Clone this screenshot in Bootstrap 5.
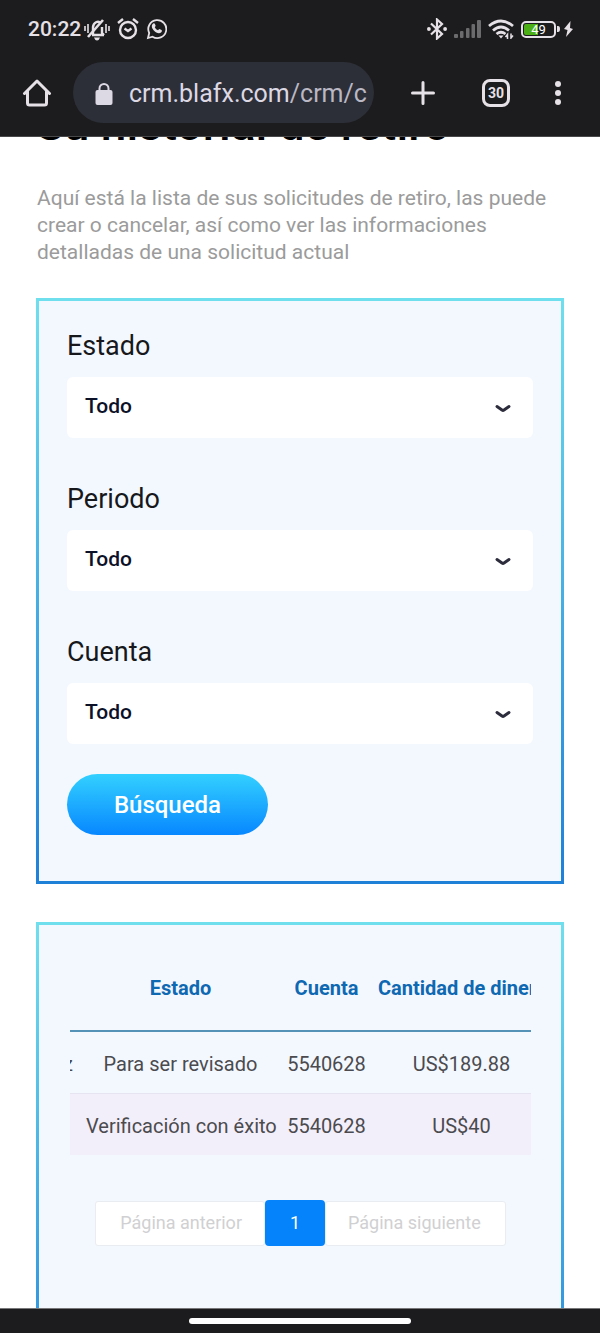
<!DOCTYPE html>
<html lang="es">
<head>
<meta charset="utf-8">
<meta name="viewport" content="width=device-width, initial-scale=1">
<title>Su historial de retiro</title>
<link href="https://cdn.jsdelivr.net/npm/bootstrap@5.3.0/dist/css/bootstrap.min.css" rel="stylesheet">
<style>
  body { font-family: Roboto, "Liberation Sans", sans-serif; background: #fff; }
  .chrome { background: #1c1c1e; color: #e6e1e6; }
  .top-chrome { border-bottom: 1px solid #48484a; }
  .status { height: 58px; padding: 0 27px 0 28px; font-size: 21px; }
  .status-left { gap: 7px; }
  .status-right { gap: 7px; }
  .clock { font-weight: 500; padding-top: 2px; margin-right: -4px; }
  .toolbar { padding: 4px 18px 13px 0; }
  .tool { background: none; border: 0; padding: 0; color: inherit; display: flex; align-items: center; justify-content: center; height: 61px; }
  .tool-home { width: 73px; }
  .tool-new { width: 73px; margin-left: 12px; }
  .tool-tabs { width: 74px; }
  .tool-menu { width: 49px; }
  .tab-count { width: 28px; height: 28px; border: 3px solid #e6e1e6; border-radius: 8px; font-size: 14px; line-height: 22px; font-weight: 700; }
  .address { background: #2d2f38; height: 61px; padding: 2px 6px 0 22px; font-size: 25px; color: #dcd8e4; }
  .address .url-path { color: #bab8c4; }
  .battery { width: 35px; height: 17px; border: 2px solid #e6e1e6; border-radius: 5px; padding: 1px; }
  .battery-fill { background: linear-gradient(90deg, #4caf15 48%, transparent 48%); border-radius: 2px; font-size: 13px; line-height: 11px; color: #fff; text-align: center; }
  .page { min-height: 0; padding: 0 36px; }
  .page-title { font-size: 46px; line-height: 50px; font-weight: 500; color: #000; margin: -38px 0 36px; }
  .intro { font-size: 21px; line-height: 27px; color: #9b9b9b; margin-bottom: 32px; padding-left: 1px; }
  .panel { background: #f3f8ff; border: 3px solid; border-image: linear-gradient(#6fdfee, #1f80d8) 1; padding: 0 28px; }
  .panel-filters { padding-top: 23px; padding-bottom: 46px; margin-bottom: 38px; }
  .panel-list { padding: 31px 30px 200px 31px; }
  .filter-label { font-size: 27px; line-height: 44px; color: #17181c; margin-bottom: 9px; }
  .filter-select { height: 61px; border: 0; border-radius: 6px; font-size: 21px; font-weight: 500; color: #0d1128; padding: 0 48px 1px 18px; background-color: #fff; margin-bottom: 39px;
    background-image: url("data:image/svg+xml,%3Csvg xmlns='http://www.w3.org/2000/svg' viewBox='0 0 18 12'%3E%3Cpath d='M3 4.500L8 8q1 .7 2 0L15 4.500' fill='none' stroke='%232c2c3c' stroke-width='3' stroke-linecap='round'/%3E%3C/svg%3E");
    background-size: 18px 12px; background-position: right 21px center; }
  .filter-last { margin-bottom: 30px; }
  .btn-search { width: 201px; height: 61px; border: 0; color: #fff; font-size: 24px; font-weight: 500; background: linear-gradient(#33d0ff, #0787ff); }
  .list-clip { overflow: hidden; }
  .requests { width: 492px; margin: 0 0 0 -11px; table-layout: fixed; text-align: center; white-space: nowrap; font-size: 20px; color: #4b4b4f; }
  .requests th, .requests td { padding: 0 6px; }
  .requests th { height: 75px; color: #0f68b2; font-size: 20px; font-weight: 700; vertical-align: middle; padding-bottom: 11px; border-bottom: 2px solid #5592b8; }
  .requests td { height: 62px; padding-top: 3px; vertical-align: middle; }
  .requests td:first-child { padding-right: 8px; padding-left: 4px; }
  .requests tr.striped td { background: #f3effa; border-top: 1px solid #e6e4f0; }
  .w-name { width: 21px; } .w-state { width: 201px; } .w-acc { width: 91px; }
  .pager { margin-top: 45px; font-size: 18px; }
  .pager a { text-decoration: none; }
  .pager-side { background: #fff; border: 1px solid #e9ecf0; height: 45px; color: #d0d0d2; line-height: 42px; border-radius: 3px; }
  .pager-prev { padding: 0 22px 0 24px; }
  .pager-next { padding: 0 24px 0 22px; }
  .pager-now { background: #0583fb; color: #fff; width: 60px; height: 46px; line-height: 46px; border-radius: 4px; text-align: center; }
  .gesture { height: 25px; border-top: 1px solid #77777a; }
  .gesture span { width: 222px; height: 6px; background: #fff; border-radius: 3px; }
</style>
</head>
<body class="d-flex flex-column vh-100 overflow-hidden">
<header class="chrome top-chrome flex-shrink-0 position-relative">
  <div class="status d-flex align-items-center justify-content-between">
    <div class="status-left d-flex align-items-center">
      <span class="clock">20:22</span>
      <svg width="26" height="24" viewBox="0 0 26 24" fill="none" stroke="currentColor" stroke-width="2"><path d="M8 18h12M9 17V10a5 6 0 0 1 8-4M18 10v6l2 2" stroke-width="2.400"/><path d="M4 20L19 3" stroke-width="2.600"/><path d="M1 9v5M4 7v9M22 7v9M25 9v5" stroke-width="1.600"/><path d="M10 20.500h6q-1 3-3 3t-3-3z" fill="currentColor" stroke="none"/></svg>
      <svg width="22" height="22" viewBox="0 0 22 22" fill="none" stroke="currentColor" stroke-width="2.400"><circle cx="11" cy="12" r="8"/><path d="M1 5l5-4M21 5l-5-4M7.500 10.500L11 13l3.500-2.500"/></svg>
      <svg width="21" height="22" viewBox="0 0 21 22"><path d="M2 20l1.200-5A9 9 0 1 1 6.500 18.700z" fill="none" stroke="currentColor" stroke-width="1.800"/><path d="M7.300 5.500c.8-.5 1.300-.2 1.600.5l.7 1.600c.2.600-.8 1.400-.8 1.700.7 1.500 1.900 2.500 3.200 3 .4 0 1-1.300 1.500-1.200l2 1c.7.400.4 1.600-.2 2.200-2.300 2-5.400.3-7.200-1.500C6.200 10.800 4.500 7.500 7.300 5.500z" fill="currentColor"/></svg>
    </div>
    <div class="status-right d-flex align-items-center">
      <svg width="20" height="22" viewBox="0 0 20 22" fill="none" stroke="currentColor" stroke-width="2.200"><path d="M4 5.500l11 10.500-5 4.500V1.500L15 6 4 16.500"/><circle cx="1.900" cy="11" r="1.900" fill="currentColor" stroke="none"/><circle cx="18.100" cy="11" r="1.900" fill="currentColor" stroke="none"/></svg>
      <svg width="27" height="18" viewBox="0 0 27 18" fill="#6b6b6e"><rect y="14" width="4" height="4" rx="1"/><rect x="6" y="11" width="3.500" height="7" rx="1"/><rect x="12" y="8" width="3.500" height="10" rx="1"/><rect x="17.500" y="4" width="3.500" height="14" rx="1"/><rect x="23" width="4" height="18" rx="1"/></svg>
      <svg width="26" height="20" viewBox="0 0 26 20" fill="none" stroke="currentColor" stroke-width="2.800"><path d="M1 7Q13-3 25 7M5 11.500q8-7 16 0M8.500 15q4.500-3.500 9 0"/><path d="M10.500 16.500h5L13 19.500z" fill="currentColor" stroke="none"/><path d="M19.500 20v-4.500l-2 2.500M23 14.500V19l2-2.500" stroke-width="1.500"/></svg>
      <div class="d-flex align-items-center">
        <div class="battery"><div class="battery-fill">49</div></div>
        <svg width="4" height="6" viewBox="0 0 4 6"><path d="M1 0h1q2 0 2 3T2 6H1z" fill="currentColor"/></svg>
        <svg class="ms-1" width="9" height="18" viewBox="0 0 9 18"><path d="M6.500 1L0 9l3.500 1L2 17l7-8-3-1z" fill="currentColor"/></svg>
      </div>
    </div>
  </div>
  <div class="toolbar d-flex align-items-center">
    <button class="tool tool-home" aria-label="Inicio"><svg width="30" height="28" viewBox="0 0 30 28" fill="none" stroke="currentColor" stroke-width="3" stroke-linejoin="round" stroke-linecap="round"><path d="M2.500 14.500L15 2l12.500 12.500M5.500 12v12q0 2 2 2h15q2 0 2-2V12"/></svg></button>
    <div class="address rounded-pill d-flex align-items-center flex-grow-1 overflow-hidden text-nowrap">
      <svg class="flex-shrink-0 me-3" width="18" height="22" viewBox="0 0 17 22"><rect y="7" width="17" height="15" rx="2" fill="currentColor"/><path d="M4 8V5.500a4.500 4.500 0 0 1 9 0V8" fill="none" stroke="currentColor" stroke-width="2"/></svg>
      <span>crm.blafx.com</span><span class="url-path">/crm/c</span>
    </div>
    <button class="tool tool-new" aria-label="Nueva pestaña"><svg width="24" height="24" viewBox="0 0 24 24" stroke="currentColor" stroke-width="3" stroke-linecap="round"><path d="M1.500 12h21M12 1.500v21"/></svg></button>
    <button class="tool tool-tabs"><span class="tab-count">30</span></button>
    <button class="tool tool-menu" aria-label="Menú"><svg width="6" height="26" viewBox="0 0 6 26" fill="currentColor"><circle cx="3" cy="4" r="3"/><circle cx="3" cy="13" r="3"/><circle cx="3" cy="22" r="3"/></svg></button>
  </div>
</header>

<main class="page flex-grow-1 overflow-hidden">
  <h1 class="page-title">Su historial de retiro</h1>
  <p class="intro">Aquí está la lista de sus solicitudes de retiro, las puede crear o cancelar, así como ver las informaciones detalladas de una solicitud actual</p>

  <form class="panel panel-filters">
    <label class="filter-label d-block" for="estado">Estado</label>
    <select class="form-select filter-select" id="estado"><option>Todo</option></select>
    <label class="filter-label d-block" for="periodo">Periodo</label>
    <select class="form-select filter-select" id="periodo"><option>Todo</option></select>
    <label class="filter-label d-block" for="cuenta">Cuenta</label>
    <select class="form-select filter-select filter-last" id="cuenta"><option>Todo</option></select>
    <button type="button" class="btn btn-search rounded-pill">Búsqueda</button>
  </form>

  <section class="panel panel-list">
    <div class="list-clip">
      <table class="requests">
        <colgroup><col class="w-name"><col class="w-state"><col class="w-acc"><col></colgroup>
        <thead><tr><th></th><th>Estado</th><th>Cuenta</th><th>Cantidad de dinero</th></tr></thead>
        <tbody>
          <tr><td>z</td><td>Para ser revisado</td><td>5540628</td><td>US$189.88</td></tr>
          <tr class="striped"><td></td><td>Verificación con éxito</td><td>5540628</td><td>US$40</td></tr>
        </tbody>
      </table>
    </div>
    <nav class="pager d-flex justify-content-center align-items-center text-nowrap" aria-label="Páginas">
      <a class="pager-side pager-prev" href="#">Página anterior</a>
      <a class="pager-now" href="#">1</a>
      <a class="pager-side pager-next" href="#">Página siguiente</a>
    </nav>
  </section>
</main>

<footer class="chrome gesture flex-shrink-0 d-flex align-items-center justify-content-center"><span></span></footer>
<script src="https://cdn.jsdelivr.net/npm/bootstrap@5.3.0/dist/js/bootstrap.bundle.min.js"></script>
</body>
</html>
